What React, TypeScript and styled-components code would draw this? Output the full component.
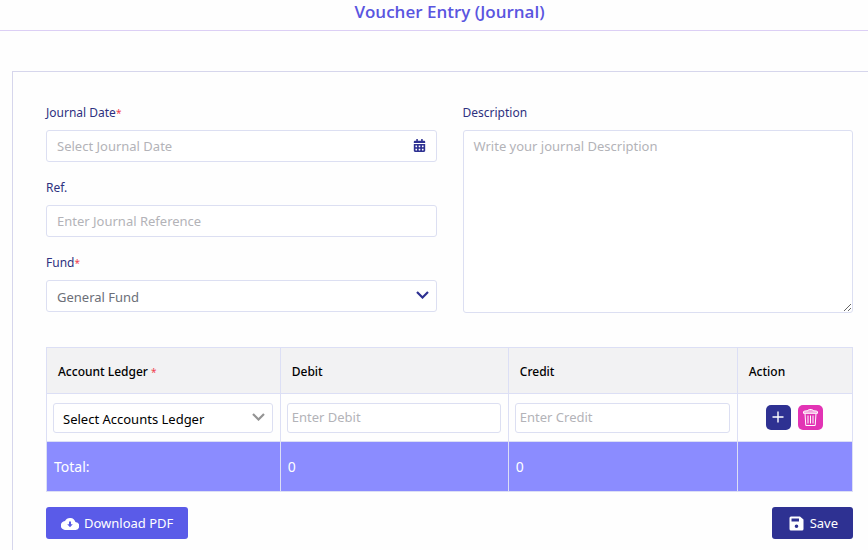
import React from "react";
import styled, { createGlobalStyle, css } from "styled-components";
import { FaCalendarAlt } from "react-icons/fa";

const GlobalStyle = createGlobalStyle`
  *, *::before, *::after { box-sizing: border-box; }
  body {
    margin: 0;
    overflow: hidden;
    background: #fefefe;
    color: #000;
    font-family: "Noto Sans", "Open Sans", sans-serif;
    font-size: 13px;
    line-height: 20px;
  }
  input, select, textarea, button { font: inherit; }
`;

const Header = styled.header`
  display: flex;
  justify-content: center;
  height: 31px;
  padding-left: 31px;
  border-bottom: 1px solid #dccff5;
`;

const Title = styled.h1`
  margin: 0;
  color: #5a55e0;
  font-family: "Open Sans", sans-serif;
  font-size: 17px;
  font-weight: 600;
  line-height: 24px;
`;

const Panel = styled.main`
  margin: 40px 0 0 12px;
  padding: 31px 15px 24px 33px;
  border: 1px solid #d6d6ec;
  border-right: 0;
`;

const Fields = styled.div`
  display: grid;
  grid-template-columns: 1fr 1fr;
  column-gap: 26px;
`;

const FieldColumn = styled.div`
  display: flex;
  flex-direction: column;
  gap: 16px;
`;

const Field = styled.div`
  display: flex;
  flex-direction: column;
  gap: 7px;
`;

const Label = styled.label`
  color: #2e3180;
  font-size: 12px;
`;

const Required = styled.span`
  color: #f0424f;
  font-size: 10px;
  font-weight: 400;
  line-height: 1;
`;

const boxed = css`
  width: 100%;
  border: 1px solid #dcdff2;
  border-radius: 3px;
  background: #fff;
  outline: none;
  &::placeholder { color: #b3b3b8; opacity: 1; }
`;

const TextInput = styled.input<{ $compact?: boolean }>`
  ${boxed}
  display: block;
  height: ${(p) => (p.$compact ? 30 : 32)}px;
  padding: ${(p) => (p.$compact ? "0 4px 2px" : "0 10px")};
`;

const TextArea = styled.textarea`
  ${boxed}
  display: block;
  height: 183px;
  padding: 5px 10px;
  resize: vertical;
`;

const Adorned = styled.div`
  display: grid;
  align-items: center;
  > * { grid-area: 1 / 1; }
`;

const Adornment = styled.span<{ $tone: string; $inset: number }>`
  display: flex;
  justify-self: end;
  margin: 0 ${(p) => p.$inset}px 2px 0;
  color: ${(p) => p.$tone};
  pointer-events: none;
`;

const Select = styled.select<{ $compact?: boolean }>`
  ${boxed}
  height: ${(p) => (p.$compact ? 30 : 32)}px;
  padding: ${(p) => (p.$compact ? "2px 32px 0 9px" : "1px 32px 0 10px")};
  color: ${(p) => (p.$compact ? "#000" : "#6c6f78")};
  appearance: none;
`;

const LedgerTable = styled.table`
  width: 100%;
  margin-top: 34px;
  border-collapse: collapse;
  table-layout: fixed;
  th, td { border: 1px solid #dcdff5; }
`;

const LedgerColumn = styled.col<{ $share: string }>`
  width: ${(p) => p.$share};
`;

const HeadCell = styled.th`
  height: 46px;
  padding: 2px 11px 0;
  background: #f2f2f3;
  font-size: 12px;
  font-weight: 500;
  text-align: left;
`;

const EntryCell = styled.td`
  height: 48px;
  padding: 0 7px 0 6px;
`;

const TotalCell = styled.td`
  height: 50px;
  padding: 0 7px;
  background: #8b8cff;
  color: #fff;
  font-size: 14px;
`;

const Actions = styled.div`
  display: flex;
  justify-content: center;
  gap: 7px;
`;

const IconButton = styled.button<{ $fill: string }>`
  display: flex;
  align-items: center;
  justify-content: center;
  width: 25px;
  height: 25px;
  padding: 0;
  border: 0;
  border-radius: 5px;
  background: ${(p) => p.$fill};
  color: #fff;
`;

const Footer = styled.div`
  display: flex;
  justify-content: space-between;
  margin-top: 15px;
`;

const Button = styled.button<{ $fill: string; $gap: number }>`
  display: flex;
  align-items: center;
  gap: ${(p) => p.$gap}px;
  height: 32px;
  padding: 0 15px;
  border: 0;
  border-radius: 3px;
  background: ${(p) => p.$fill};
  color: #fff;
`;

const SaveButton = styled(Button)`
  padding-left: 17px;
`;

const ChevronIcon = () => (
  <svg width="13" height="8" viewBox="0 0 13 8" fill="none" stroke="currentColor" strokeWidth="2.2" aria-hidden="true">
    <path d="M1 1l5.500 5.500L12 1" />
  </svg>
);

const PlusIcon = () => (
  <svg width="13" height="13" viewBox="0 0 13 13" fill="none" stroke="currentColor" strokeWidth="1.4" aria-hidden="true">
    <path d="M6 .5v11M.5 6h11" />
  </svg>
);

const TrashIcon = () => (
  <svg width="15" height="17" viewBox="0 0 15 17" fill="none" stroke="currentColor" aria-hidden="true">
    <path d="M.5 4.300V3q0-.8 1-.9l3.500-.4Q5.200.5 6.500.5h2Q9.800.5 10 1.700l3.500.4q1 .1 1 .9v1.300z" fill="currentColor" fillOpacity=".55" />
    <path d="M2 4.500l.8 12h9.400l.8-12M5 6.500v8M7.500 6.500v8M10 6.500v8" />
  </svg>
);

const CloudIcon = () => (
  <svg width="18" height="13" viewBox="0 0 18 13" fill="currentColor" aria-hidden="true">
    <path fillRule="evenodd" d="M4.500 13A4.400 4.400 0 0 1 4 4.100 5.600 5.600 0 0 1 14.400 5 4 4 0 0 1 14 13zM8 4.500V7.300H6.200L9 10.200l2.800-2.900H10V4.500z" />
  </svg>
);

const SaveIcon = () => (
  <svg width="15" height="15" viewBox="0 0 15 15" fill="currentColor" aria-hidden="true">
    <path fillRule="evenodd" d="M2 .5h9l3.500 3V13a1.500 1.500 0 0 1-1.500 1.500H2A1.500 1.500 0 0 1 .5 13V2A1.500 1.500 0 0 1 2 .5zM2.500 2.500v3h7.500v-3zM7.500 8.500a1.800 1.800 0 1 0 0 3.600 1.800 1.800 0 0 0 0-3.600z" />
  </svg>
);

export default function App() {
  return (
    <>
      <GlobalStyle />
      <Header>
        <Title>Voucher Entry (Journal)</Title>
      </Header>
      <Panel>
        <Fields>
          <FieldColumn>
            <Field>
              <Label htmlFor="date">Journal Date<Required>*</Required></Label>
              <Adorned>
                <TextInput id="date" placeholder="Select Journal Date" />
                <Adornment $tone="#2e3192" $inset={11}><FaCalendarAlt size={13} /></Adornment>
              </Adorned>
            </Field>
            <Field>
              <Label htmlFor="reference">Ref.</Label>
              <TextInput id="reference" placeholder="Enter Journal Reference" />
            </Field>
            <Field>
              <Label htmlFor="fund">Fund<Required>*</Required></Label>
              <Adorned>
                <Select id="fund"><option>General Fund</option></Select>
                <Adornment $tone="#2e3192" $inset={8}><ChevronIcon /></Adornment>
              </Adorned>
            </Field>
          </FieldColumn>
          <Field>
            <Label htmlFor="description">Description</Label>
            <TextArea id="description" placeholder="Write your journal Description" />
          </Field>
        </Fields>

        <LedgerTable>
          <colgroup>
            <LedgerColumn $share="29%" />
            <LedgerColumn $share="28.3%" />
            <LedgerColumn $share="28.4%" />
            <LedgerColumn $share="14.3%" />
          </colgroup>
          <thead>
            <tr>
              <HeadCell>Account Ledger <Required>*</Required></HeadCell>
              <HeadCell>Debit</HeadCell>
              <HeadCell>Credit</HeadCell>
              <HeadCell>Action</HeadCell>
            </tr>
          </thead>
          <tbody>
            <tr>
              <EntryCell>
                <Adorned>
                  <Select $compact aria-label="Account Ledger"><option>Select Accounts Ledger</option></Select>
                  <Adornment $tone="#949494" $inset={8}><ChevronIcon /></Adornment>
                </Adorned>
              </EntryCell>
              <EntryCell><TextInput $compact aria-label="Debit" placeholder="Enter Debit" /></EntryCell>
              <EntryCell><TextInput $compact aria-label="Credit" placeholder="Enter Credit" /></EntryCell>
              <EntryCell>
                <Actions>
                  <IconButton $fill="#2e3192" aria-label="Add row"><PlusIcon /></IconButton>
                  <IconButton $fill="#e233b4" aria-label="Delete row"><TrashIcon /></IconButton>
                </Actions>
              </EntryCell>
            </tr>
            <tr>
              <TotalCell>Total:</TotalCell>
              <TotalCell>0</TotalCell>
              <TotalCell>0</TotalCell>
              <TotalCell />
            </tr>
          </tbody>
        </LedgerTable>

        <Footer>
          <Button $fill="#5a5be8" $gap={5}><CloudIcon />Download PDF</Button>
          <SaveButton $fill="#2e3192" $gap={6}><SaveIcon />Save</SaveButton>
        </Footer>
      </Panel>
    </>
  );
}
